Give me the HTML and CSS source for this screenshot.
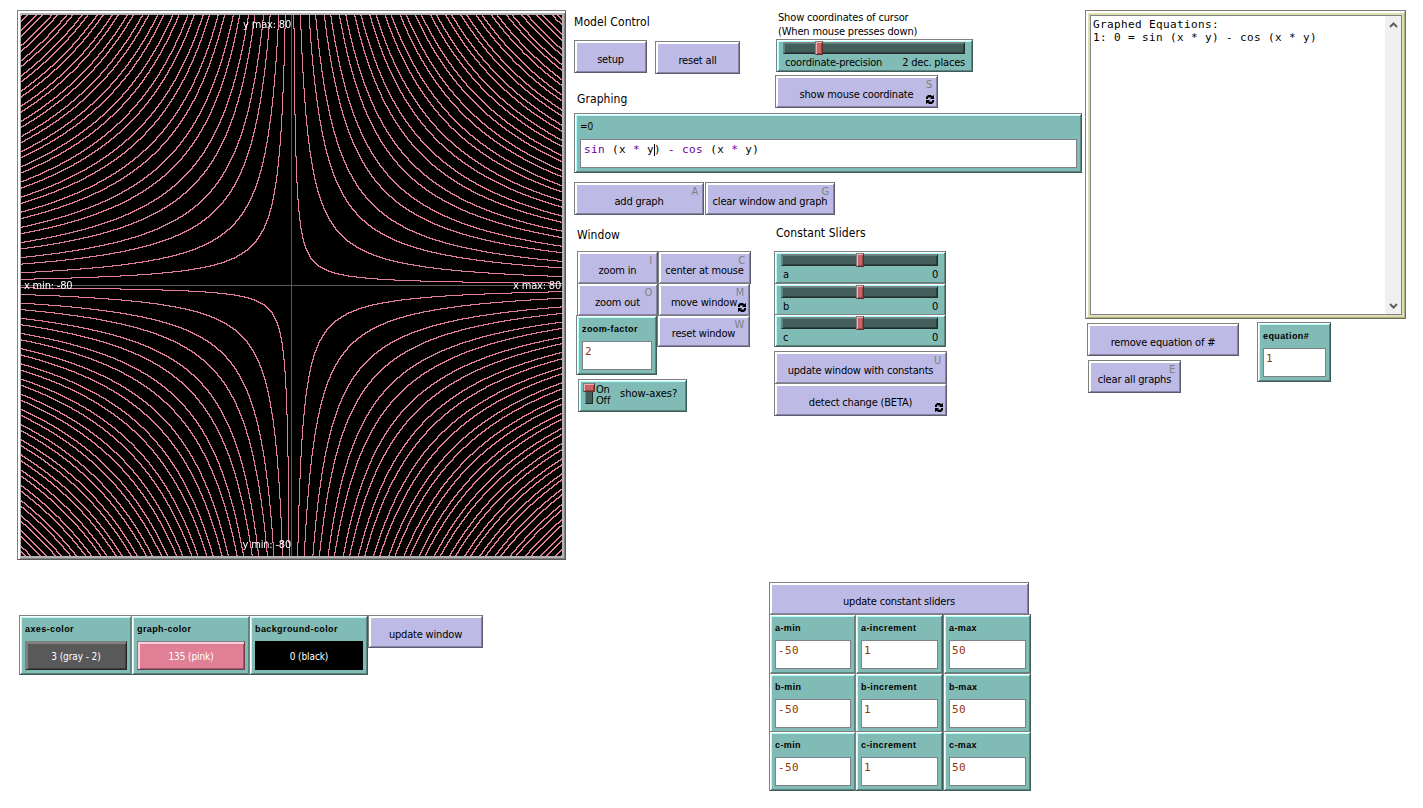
FILE: index.html
```html
<!DOCTYPE html>
<html lang="en">
<head>
<meta charset="utf-8">
<title>Graphing model</title>
<link rel="stylesheet" href="styles.css">
</head>
<body>
<svg class="defs" width="0" height="0"><symbol id="loop" viewBox="0 0 8 9"><path d="M0 4V2L2 0H5L6.2 1.2L8 0V4H4L5.4 2.4H2V4Z"/><path d="M8 5V7L6 9H3L1.800 7.800L0 9V5H4L2.600 6.600H6V5Z"/></symbol></svg>
<main class="interface">
  <section class="col-left">
    <div class="world">
      <canvas id="plot" width="541" height="541"></canvas>
      <span class="tag ymax">y max: 80</span>
      <span class="tag xmin">x min: -80</span>
      <span class="tag xmax">x max: 80</span>
      <span class="tag ymin">y min: -80</span>
    </div>
    <div class="palette">
      <div class="w input w-axes"><label>axes-color</label><div class="swatch gray">3 (gray - 2)</div></div>
      <div class="w input w-graph"><label>graph-color</label><div class="swatch pink">135 (pink)</div></div>
      <div class="w input w-back"><label>background-color</label><div class="swatch black">0 (black)</div></div>
      <button class="w btn w-update">update window</button>
    </div>
  </section>

  <section class="col-mid">
    <div class="top">
      <div class="model">
        <h2>Model Control</h2>
        <div class="pair">
          <button class="w btn setup">setup</button>
          <button class="w btn reset">reset all</button>
        </div>
        <h2 class="h-graphing">Graphing</h2>
      </div>
      <div class="coords">
        <p>Show coordinates of cursor<br>(When mouse presses down)</p>
        <div class="w slider precision"><div class="track"><i class="thumb"></i></div><div class="cap"><span>coordinate-precision</span><span>2 dec. places</span></div></div>
        <button class="w btn mouse">show mouse coordinate<kbd>S</kbd><svg class="loop"><use href="#loop"/></svg></button>
      </div>
    </div>
    <div class="w input formula"><label>=0</label><div class="field"><b>sin</b> (x <b>*</b> y<i class="caret"></i>) <b>-</b> <b>cos</b> (x <b>*</b> y)</div></div>
    <div class="actions">
      <button class="w btn">add graph<kbd>A</kbd></button>
      <button class="w btn">clear window and graph<kbd>G</kbd></button>
    </div>
    <div class="panels">
      <div class="window">
        <h2>Window</h2>
        <div class="window-grid">
          <div class="zoom">
            <button class="w btn zb">zoom in<kbd>I</kbd></button>
            <button class="w btn zb">zoom out<kbd>O</kbd></button>
            <div class="w input factor"><label>zoom-factor</label><div class="field num">2</div></div>
          </div>
          <div class="move">
            <button class="w btn center">center at mouse<kbd>C</kbd></button>
            <button class="w btn mv">move window<kbd>M</kbd><svg class="loop"><use href="#loop"/></svg></button>
            <button class="w btn rw">reset window<kbd>W</kbd></button>
          </div>
        </div>
        <div class="w switch"><div class="lever"><i></i></div><div class="onoff">On<br>Off</div><span>show-axes?</span></div>
      </div>
      <div class="constants">
        <h2>Constant Sliders</h2>
        <div class="w slider"><div class="track"><i class="thumb"></i></div><div class="cap"><span>a</span><span>0</span></div></div>
        <div class="w slider b"><div class="track"><i class="thumb"></i></div><div class="cap"><span>b</span><span>0</span></div></div>
        <div class="w slider c"><div class="track"><i class="thumb"></i></div><div class="cap"><span>c</span><span>0</span></div></div>
        <button class="w btn upd">update window with constants<kbd>U</kbd></button>
        <button class="w btn det">detect change (BETA)<svg class="loop"><use href="#loop"/></svg></button>
      </div>
    </div>
    <div class="ranges">
      <button class="w btn">update constant sliders</button>
      <div class="row">
        <div class="w input"><label>a-min</label><div class="field num">-50</div></div>
        <div class="w input"><label>a-increment</label><div class="field num">1</div></div>
        <div class="w input"><label>a-max</label><div class="field num">50</div></div>
      </div>
      <div class="row">
        <div class="w input"><label>b-min</label><div class="field num">-50</div></div>
        <div class="w input"><label>b-increment</label><div class="field num">1</div></div>
        <div class="w input"><label>b-max</label><div class="field num">50</div></div>
      </div>
      <div class="row last">
        <div class="w input"><label>c-min</label><div class="field num">-50</div></div>
        <div class="w input"><label>c-increment</label><div class="field num">1</div></div>
        <div class="w input"><label>c-max</label><div class="field num">50</div></div>
      </div>
    </div>
  </section>

  <section class="col-right">
    <div class="w output">
      <div class="console">
        <pre>Graphed Equations:
1: 0 = sin (x * y) - cos (x * y)</pre>
        <div class="scroll">
          <svg width="9" height="6" viewBox="0 0 9 6"><path d="M1 5L4.500 1.500L8 5"/></svg>
          <svg width="9" height="6" viewBox="0 0 9 6"><path d="M1 1L4.500 4.500L8 1"/></svg>
        </div>
      </div>
    </div>
    <div class="eq">
      <div class="eq-buttons">
        <button class="w btn remove">remove equation of #</button>
        <button class="w btn clear">clear all graphs<kbd>E</kbd></button>
      </div>
      <div class="w input eqnum"><label>equation#</label><div class="field num">1</div></div>
    </div>
  </section>
</main>
<script src="plot.js"></script>
</body>
</html>
```
FILE: styles.css
```css
* { box-sizing: border-box; }
body {
  margin: 0;
  background: #fff;
  color: #000;
  font: 11px/14px "DejaVu Sans Condensed", "DejaVu Sans", sans-serif;
  letter-spacing: -0.19px;
}
.defs { display: block; height: 0; }
.interface { display: flex; height: 808px; padding-top: 10px; padding-left: 17px; overflow: hidden; }
h2 { margin: 0; font-size: 12px; line-height: 16px; font-weight: 400; letter-spacing: 0.08px; white-space: nowrap; }
p { margin: 0; }

/* Bevelled widget frame */
.w {
  display: block;
  flex: none;
  position: relative;
  height: 33px;
  border: 1px solid;
  border-color: #808080 var(--dark) var(--dark) #808080;
  background: var(--face);
  box-shadow: inset 1px 1px 0 #fff, inset -1px -1px 0 var(--mid), inset 2px 2px 0 var(--light);
  --face: #81bbb5; --light: #b0ffff; --mid: #5b8480; --dark: #405c59;
}
.btn {
  --face: #bdbbe6; --light: #fff; --mid: #8584a2; --dark: #5c5b70;
  padding: 6px 0 0;
  margin: 0;
  border-radius: 0;
  color: #000;
  font: inherit;
  letter-spacing: inherit;
  text-align: center;
  white-space: nowrap;
}
kbd { position: absolute; right: 5px; top: 2px; font: inherit; color: #808080; }
.loop { position: absolute; right: 3px; bottom: 3px; width: 8px; height: 9px; }

.input { height: 60px; padding: 5px 4px 4px 5px; }
.input label {
  display: block;
  height: 20px;
  font: bold 9px/16px "Liberation Sans", Arial, sans-serif;
  letter-spacing: 0.4px;
}
.field {
  height: 29px;
  padding: 3px 3px 2px;
  border: 1px solid #808088;
  background: #fff;
  font: 11px/14px "DejaVu Sans Mono", monospace;
  letter-spacing: 0.38px;
  white-space: pre;
}
.num { color: #963700; padding-left: 2px; }
.field b { font-weight: 400; color: #660096; }
.caret { display: inline-block; width: 1px; height: 12px; margin-right: -1px; background: #000; vertical-align: -3px; }

/* Left column */
.col-left { width: 549px; flex: none; }
.world {
  position: relative;
  width: 549px; height: 550px;
  padding: 4px 3px 3px;
  border: 1px solid;
  border-color: #808080 #595959 #595959 #808080;
  background: #b3b3b3;
  box-shadow: inset 2px 2px 0 #fff, inset -1px -1px 0 #808080;
}
.world canvas { display: block; }
.tag { position: absolute; color: #fff; white-space: nowrap; }
.ymax { right: 274px; top: 7px; }
.ymin { right: 274px; top: 527px; }
.xmin { left: 6px; top: 268px; }
.xmax { right: 4px; top: 268px; }
.palette { display: flex; margin-top: 55px; margin-left: 2px; }
.w-axes { width: 113px; }
.w-graph { width: 119px; margin-left: -1px; }
.w-back { width: 119px; margin-left: -1px; }
.w-update { width: 115px; }
.swatch {
  height: 29px;
  border: 1px solid;
  color: #fff;
  font-size: 10px;
  line-height: 29px;
  letter-spacing: -0.1px;
  text-align: center;
}
.gray { background: #595959; border-color: #808080 #272727 #272727 #808080; box-shadow: inset 2px 2px 0 #808080, inset -1px -1px 0 #3e3e3e; }
.pink { background: #e07f96; border-color: #808080 #6e3e49 #6e3e49 #808080; box-shadow: inset 2px 2px 0 #ffd0dc, inset -1px -1px 0 #9d5969; }
.black { background: #000; border-color: #000; }

/* Middle column */
.col-mid { width: 508px; flex: none; margin-left: 8px; }
.top { display: flex; height: 103px; }
.model { width: 201px; padding-top: 4px; }
.pair { display: flex; align-items: flex-start; margin-top: 10px; }
.setup { width: 73px; }
.reset { width: 85px; margin: 1px 0 0 8px; }
.h-graphing { margin: 17px 0 0 3px; }
.coords p { margin-left: 3px; height: 29px; padding-top: 1px; letter-spacing: -0.16px; }
.slider { width: 172px; padding: 2px 7px 0 6px; }
.precision { width: 197px; margin-left: 1px; --at: 32px; }
.track {
  position: relative;
  height: 12px;
  border: 1px solid;
  border-color: #808080 #1f2d2c #1f2d2c #808080;
  background: #435e5b;
  box-shadow: inset 1px 1px 0 #5b8480, inset -1px -1px 0 #2f4240;
}
.thumb {
  position: absolute;
  left: calc(var(--at, 75px) - 1px);
  top: -2px;
  width: 8px;
  height: 14px;
  border: 1px solid;
  border-color: #808080 #612f2f #612f2f #808080;
  background: #c86464;
  box-shadow: inset 1px 1px 0 #f0b0b0, inset -1px -1px 0 #8c4646;
}
.cap { display: flex; justify-content: space-between; padding: 2px 0 0 2px; }
.mouse { width: 163px; margin-top: 3px; }
.formula { width: 508px; }
.formula label { font: 10px/16px "DejaVu Sans Condensed", sans-serif; letter-spacing: 0; }
.actions { display: flex; gap: 1px; margin-top: 9px; }
.actions .btn { width: 130px; }
.panels { display: flex; height: 367px; }
.window { width: 200px; padding-top: 12px; padding-left: 2px; }
.window h2 { margin-left: 1px; }
.window-grid { display: flex; margin-top: 8px; }
.zoom { width: 82px; }
.zb { width: 81px; margin: 0 0 -1px 1px; }
.factor { width: 81px; }
.center { width: 93px; }
.mv { width: 92px; margin-top: -1px; }
.rw { width: 93px; height: 32px; margin: -1px 0 0 -1px; padding-top: 5px; }
.switch { display: flex; width: 109px; margin: 4px 0 0 2px; padding: 3px 0 0 4px; }
.lever { width: 8px; height: 21px; margin-left: 2px; border: 1px solid; border-color: #808080 #1f2d2c #1f2d2c #808080; background: #435e5b; }
.lever i { display: block; width: 12px; height: 9px; margin: -1px -3px; border: 1px solid; border-color: #808080 #612f2f #612f2f #808080; background: #c86464; box-shadow: inset 1px 1px 0 #f0b0b0, inset -1px -1px 0 #8c4646; }
.onoff { width: 24px; margin-left: 3px; padding-top: 1px; line-height: 11px; }
.switch span { padding-top: 4px; letter-spacing: 0; }
.constants { padding-top: 10px; }
.constants h2 { margin: 0 0 10px 2px; }
.b { margin-top: -1px; }
.c { margin-top: -2px; }
.upd { width: 173px; margin-top: 4px; }
.det { width: 173px; margin-top: -1px; }
.ranges { width: 262px; margin-left: 195px; }
.ranges > .btn { width: 260px; margin-bottom: -1px; }
.row { display: flex; height: 59px; }
.row .w { width: 88px; }
.row .w:first-child { width: 87px; margin-right: -1px; }
.row .w:last-child { margin-left: 0; }
.row:nth-child(3) { height: 58px; }

/* Right column */
.col-right { width: 321px; flex: none; margin-left: 3px; }
.output {
  height: 309px;
  padding: 4px 3px 3px 4px;
  --face: #dedeb0; --light: #fff; --mid: #b0b086; --dark: #6d6d58;
}
.console { display: flex; height: 300px; border: 1px solid #808088; background: #fff; }
.console pre { flex: 1; margin: 2px 0 0 2px; font: 11px/13px "DejaVu Sans Mono", monospace; letter-spacing: 0.38px; }
.scroll { display: flex; flex-direction: column; justify-content: space-between; align-items: center; width: 16px; padding: 6px 0 5px; background: #f0f0f0; }
.scroll path { fill: none; stroke: #606060; stroke-width: 2; }
.eq { display: flex; justify-content: space-between; padding: 3px 75px 0 2px; }
.remove { width: 152px; margin-top: 1px; }
.clear { width: 93px; margin: 4px 0 0 1px; }
.eqnum { width: 74px; }
```
FILE: plot.js
```js
// Implicit curve sin(xy) - cos(xy) = 0, angles in degrees, one sample per patch.
const N = 270, MAX = 80, size = 2 * N + 1;
const ctx = document.getElementById('plot').getContext('2d');
const f = (px, py) => {
  const a = (px * MAX / N) * (py * MAX / N) * Math.PI / 180;
  return Math.sin(a) - Math.cos(a);
};
const nextToNegative = (x, y) => {
  for (let dy = -1; dy <= 1; dy++) {
    for (let dx = -1; dx <= 1; dx++) {
      if (f(x + dx, y + dy) < 0) return true;
    }
  }
  return false;
};
ctx.fillStyle = '#000';
ctx.fillRect(0, 0, size, size);
ctx.fillStyle = '#e07f96';
for (let y = -N; y <= N; y++) {
  for (let x = -N; x <= N; x++) {
    if (f(x, y) >= 0 && nextToNegative(x, y)) ctx.fillRect(x + N, N - y, 1, 1);
  }
}
ctx.fillStyle = '#595959';
ctx.fillRect(N, 0, 1, size);
ctx.fillRect(0, N, size, 1);
```
